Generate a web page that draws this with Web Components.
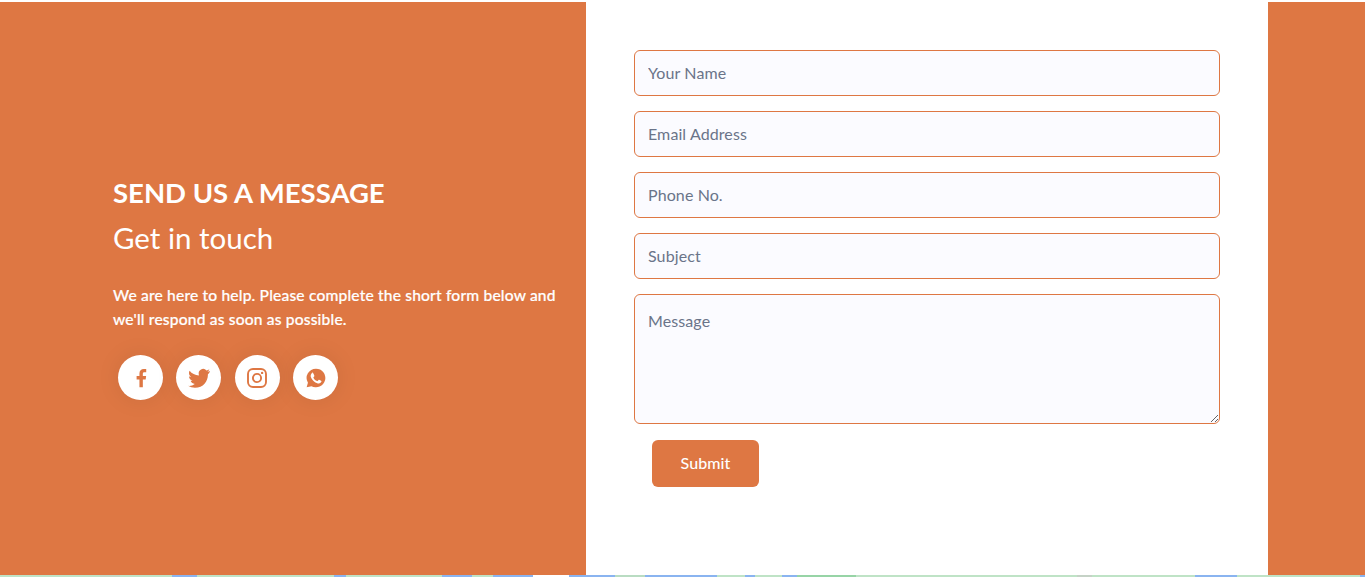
<!DOCTYPE html>
<html><head><meta charset="utf-8"><title>Contact</title>
<style>
html,body{margin:0;padding:0;background:#fff;overflow:hidden}
body{font-family:"Lato","Noto Sans",sans-serif}
</style></head><body>
<contact-page></contact-page>
<template id="t-social"><style>
:host{display:flex;width:45px;height:45px;border-radius:50%;background:#fff;align-items:center;justify-content:center;box-shadow:0 0 24px rgba(0,0,0,.08);color:#de7743}
</style><slot></slot></template>
<script>
const C='#de7743';
class ContactField extends HTMLElement{
  connectedCallback(){
    const s=this.attachShadow({mode:'open'});
    const multi=this.hasAttribute('multiline');
    const ph=this.getAttribute('placeholder');
    s.innerHTML=`<style>
    :host{display:block}
    .f{display:block;box-sizing:border-box;width:100%;height:${multi?130:46}px;margin:0;padding:${multi?'14px 13px':'0 13px 2px'};border:1px solid ${C};border-radius:6px;background:#fbfbff;font:400 16px/24px Lato,"Noto Sans",sans-serif;letter-spacing:.1px;color:#333;outline:0}
    .f::placeholder{color:#6a7489;opacity:1}
    </style>${multi?`<textarea class="f" placeholder="${ph}"></textarea>`:`<input class="f" placeholder="${ph}">`}`;
  }
}
customElements.define('contact-field',ContactField);
class SocialLink extends HTMLElement{
  connectedCallback(){
    const s=this.attachShadow({mode:'open'});
    s.appendChild(document.getElementById('t-social').content.cloneNode(true));
  }
}
customElements.define('social-link',SocialLink);
class ContactIntro extends HTMLElement{
  connectedCallback(){
    const s=this.attachShadow({mode:'open'});
    s.innerHTML=`<style>
    :host{display:flex;flex-direction:column;justify-content:center;box-sizing:border-box;width:586px;padding:0 20px 2px 113px;color:#fff}
    h2{margin:0;font:700 27.5px/36px Lato,sans-serif}
    h3{margin:9px 0 0;font:400 29.5px/36px Lato,sans-serif}
    p{margin:27px 0 0;font:500 15.6px/24px Lato,sans-serif;letter-spacing:.17px;white-space:nowrap;-webkit-text-stroke:.2px #fff}
    .soc{display:flex;gap:13.4px;margin:24px 0 0 5px}
    </style>
    <h2>SEND US A MESSAGE</h2><h3>Get in touch</h3>
    <p>We are here to help. Please complete the short form below and<br>we'll respond as soon as possible.</p>
    <div class="soc"><slot></slot></div>`;
  }
}
customElements.define('contact-intro',ContactIntro);
class ContactForm extends HTMLElement{
  connectedCallback(){
    const s=this.attachShadow({mode:'open'});
    s.innerHTML=`<style>
    :host{display:flex;flex-direction:column;gap:15px;box-sizing:border-box;width:682px;padding:48px;background:#fff}
    button{align-self:flex-start;margin:1px 0 0 18px;width:107px;height:47px;padding:0 0 2px;border:0;border-radius:6px;background:${C};color:#fff;font:500 16px Lato,sans-serif;letter-spacing:.1px}
    </style><slot></slot><button type="button">Submit</button>`;
  }
}
customElements.define('contact-form',ContactForm);
class MapStrip extends HTMLElement{
  connectedCallback(){
    const s=this.attachShadow({mode:'open'});
    const G='#bfe3c6',B='#8ab4f0';
    const segs=[[0,G],[100,'#c3d8c6'],[120,G],[172,B],[197,G],[334,B],[346,G],[442,B],[472,G],[493,B],[533,'#fff'],[569,B],[615,'#b9dcc2'],[645,B],[717,G],[745,B],[755,G],[782,B],[797,'#97d4a6'],[856,G],[1077,'#c5d2c6'],[1092,G],[1195,B],[1237,G],[1360,B]];
    const stops=segs.map(([x,c],i)=>{const e=i+1<segs.length?segs[i+1][0]:1365;return `${c} ${x}px ${e}px`}).join(',');
    s.innerHTML=`<style>:host{display:block;height:2px;background:linear-gradient(90deg,${stops})}</style>`;
  }
}
customElements.define('map-strip',MapStrip);
class ContactPage extends HTMLElement{
  connectedCallback(){
    const s=this.attachShadow({mode:'open'});
    s.innerHTML=`<style>
    :host{display:block;padding-top:2px}
    .m{display:flex;height:573px;background:${C}}
    svg{display:block}
    </style><div class="m">
    <contact-intro>
      <social-link><svg width="22" height="22" viewBox="0 0 24 24" fill="currentColor"><path d="M14 22v-8.500h3.100l.5-3.700H14V7.500c0-1.100.3-1.800 1.800-1.800h1.900V2.300C17.400 2.300 16.300 2.200 15 2.200c-2.800 0-4.700 1.700-4.700 4.800v2.800H7.200v3.700h3.100V22z"/></svg></social-link>
      <social-link><svg width="24" height="24" viewBox="0 0 24 24" fill="currentColor"><path d="M23 5.100c-.8.400-1.700.600-2.600.700.900-.600 1.600-1.400 2-2.500-.900.500-1.800.900-2.900 1.100A4.500 4.500 0 0 0 11.800 8.500c0 .4 0 .7.100 1C8.100 9.300 4.800 7.500 2.600 4.700c-.4.700-.6 1.500-.6 2.300 0 1.600.8 3 2 3.800-.7 0-1.400-.2-2-.6v.1c0 2.200 1.600 4 3.600 4.400-.7.200-1.400.2-2 .1.600 1.800 2.200 3.100 4.200 3.100A9 9 0 0 1 1 19.800 12.800 12.800 0 0 0 8 21.800c8.300 0 12.900-6.900 12.900-12.900v-.6c.9-.6 1.600-1.400 2.100-3.200z"/></svg></social-link>
      <social-link><svg width="20" height="20" viewBox="0 0 20 20" fill="none" stroke="currentColor" stroke-width="1.900"><rect x="1" y="1" width="18" height="18" rx="5"/><circle cx="10" cy="10" r="4.100"/><circle cx="15.100" cy="4.900" r="1.200" fill="currentColor" stroke="none"/></svg></social-link>
      <social-link><svg width="22" height="22" viewBox="0 0 24 24" fill="currentColor"><path fill-rule="evenodd" d="M12 1.800A10.200 10.200 0 0 0 3.200 17.200L1.800 22.200l5.200-1.300A10.200 10.200 0 1 0 12 1.800zM8.600 6.900c.3 0 .5 0 .7.500l.9 2.100c.1.300 0 .5-.1.700l-.8 1c-.2.200-.2.400 0 .7.900 1.600 2.100 2.700 3.800 3.500.3.100.5.100.7-.1l1-1.200c.2-.3.400-.2.700-.1l2 1c.3.100.5.200.5.400 0 1.300-1 2.400-2.700 2.500-1.200.1-3.300-.5-5.400-2.200-2-1.700-3.200-3.600-3.600-5.100-.4-1.700.4-3.100 1.500-4.200.2-.2.500-.3.800-.3z"/></svg></social-link>
    </contact-intro>
    <contact-form>
      <contact-field placeholder="Your Name"></contact-field>
      <contact-field placeholder="Email Address"></contact-field>
      <contact-field placeholder="Phone No."></contact-field>
      <contact-field placeholder="Subject"></contact-field>
      <contact-field multiline placeholder="Message"></contact-field>
    </contact-form>
    </div><map-strip></map-strip>`;
  }
}
customElements.define('contact-page',ContactPage);
</script>
</body></html>
